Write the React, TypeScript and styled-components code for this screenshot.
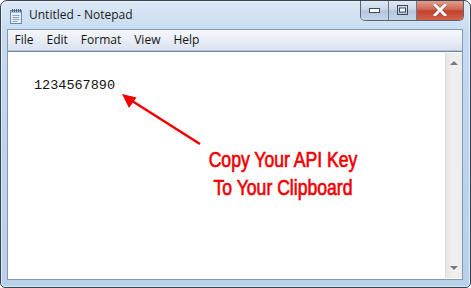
import React from 'react'
import styled, { createGlobalStyle } from 'styled-components'

const GlobalStyle = createGlobalStyle`
  html, body {
    margin: 0;
    padding: 0;
    background: #ffffff;
  }
`

const Window = styled.div`
  position: relative;
  box-sizing: border-box;
  width: 471px;
  height: 288px;
  display: flex;
  flex-direction: column;
  border: 1px solid #3a4250;
  border-radius: 7px 7px 5px 5px;
  background: linear-gradient(180deg, #dbe8f6 0%, #c6daf0 12%, #bcd3ec 60%, #b8d0ea 100%);
  box-shadow: inset 0 0 0 1px rgba(255, 255, 255, 0.55);
  font-family: 'Open Sans', 'Liberation Sans', sans-serif;
  overflow: hidden;
`

const TitleBar = styled.div`
  height: 28px;
  display: flex;
  align-items: flex-start;
  padding-left: 7px;
`

const AppIcon = styled.svg`
  width: 16px;
  height: 16px;
  margin-top: 7px;
  flex: none;
`

const Title = styled.div`
  margin-left: 5px;
  margin-top: 6px;
  font-size: 12px;
  line-height: 16px;
  color: #1b1b1b;
`

const Caption = styled.div`
  margin-left: auto;
  margin-right: 6px;
  margin-top: -1px;
  display: flex;
  height: 20px;
  border: 1px solid #5b6373;
  border-top: none;
  border-radius: 0 0 5px 5px;
  overflow: hidden;
`

const CaptionButton = styled.div<{ $w: number; $close?: boolean }>`
  width: ${(p) => p.$w}px;
  display: flex;
  align-items: center;
  justify-content: center;
  background: ${(p) =>
    p.$close
      ? 'linear-gradient(180deg, #e6a394 0%, #d06a58 45%, #c2412e 55%, #d3624a 100%)'
      : 'linear-gradient(180deg, #e2ebf5 0%, #cbd8e8 45%, #b5c6dc 55%, #c5d5e8 100%)'};
  & + & {
    border-left: 1px solid #6d7788;
  }
`

const Client = styled.div`
  flex: 1;
  margin: 0 7px 7px 6px;
  display: flex;
  flex-direction: column;
  border: 1px solid #8399b4;
  background: #ffffff;
`

const MenuBar = styled.div`
  height: 20px;
  display: flex;
  align-items: center;
  padding-left: 0;
  background: linear-gradient(180deg, #f6f8fc 0%, #e8edf6 50%, #dbe2ef 100%);
  border-bottom: 1px solid #b6c4d8;
`

const MenuItem = styled.div`
  padding: 0 6.5px;
  font-size: 12px;
  line-height: 18px;
  color: #141414;
`

const Editor = styled.div`
  position: relative;
  flex: 1;
  display: flex;
  border-top: 1px solid #6c86a8;
`

const TextArea = styled.div`
  flex: 1;
  padding: 26px 0 0 26px;
  font-family: 'Liberation Mono', 'DejaVu Sans Mono', monospace;
  font-size: 13.5px;
  line-height: 16px;
  color: #111111;
`

const Scrollbar = styled.div`
  width: 16px;
  margin: 1px 0 1px 0;
  display: flex;
  flex-direction: column;
  justify-content: space-between;
  align-items: center;
  background: linear-gradient(90deg, #e6e6e6 0%, #f0f0f0 40%, #ececec 100%);
  border-left: 1px solid #dedede;
`

const ScrollArrow = styled.div<{ $down?: boolean }>`
  width: 0;
  height: 0;
  margin: 8px 0;
  border-left: 4px solid transparent;
  border-right: 4px solid transparent;
  ${(p) =>
    p.$down ? 'border-top: 4px solid #7a7a7a;' : 'border-bottom: 4px solid #7a7a7a;'}
`

const Callout = styled.div`
  position: absolute;
  left: 125px;
  top: 94px;
  width: 300px;
  text-align: center;
  font-family: 'Liberation Sans', 'DejaVu Sans', sans-serif;
  font-weight: 400;
  font-size: 22px;
  line-height: 28px;
  color: #f20000;
  -webkit-text-stroke: 0.7px #f20000;
  transform: scaleX(0.8);
  transform-origin: 150px 0;
`

const ArrowLayer = styled.svg`
  position: absolute;
  left: 0;
  top: 0;
  width: 471px;
  height: 288px;
  pointer-events: none;
`

const NotepadIcon = () => (
  <AppIcon viewBox="0 0 16 16">
    <rect x="2.5" y="2.5" width="11" height="13" fill="#e9f1f8" stroke="#6f8aa8" />
    <rect x="3" y="3" width="10" height="2" fill="#9fc3e6" />
    <line x1="4.5" y1="7.5" x2="11.5" y2="7.5" stroke="#8aa2bd" />
    <line x1="4.5" y1="9.5" x2="11.5" y2="9.5" stroke="#8aa2bd" />
    <line x1="4.5" y1="11.5" x2="11.5" y2="11.5" stroke="#8aa2bd" />
    <line x1="4.5" y1="13.5" x2="9.5" y2="13.5" stroke="#8aa2bd" />
    {[4, 6, 8, 10, 12].map((x) => (
      <rect key={x} x={x} y="1" width="1" height="3" fill="#4d6378" />
    ))}
  </AppIcon>
)

const menus = ['File', 'Edit', 'Format', 'View', 'Help']

export default function App() {
  return (
    <>
      <GlobalStyle />
      <Window>
        <TitleBar>
          <NotepadIcon />
          <Title>Untitled - Notepad</Title>
          <Caption>
            <CaptionButton $w={27}>
              <svg width="11" height="5" viewBox="0 0 11 5">
                <rect x="0.5" y="0.5" width="10" height="4" fill="#ffffff" stroke="#3d4a5c" />
              </svg>
            </CaptionButton>
            <CaptionButton $w={27}>
              <svg width="11" height="10" viewBox="0 0 11 10">
                <rect x="0.5" y="0.5" width="10" height="9" fill="none" stroke="#3d4a5c" />
                <rect x="2.5" y="3" width="6" height="4" fill="#ffffff" stroke="#3d4a5c" />
              </svg>
            </CaptionButton>
            <CaptionButton $w={46} $close>
              <svg width="14" height="12" viewBox="0 0 14 12">
                <path
                  d="M2 1 L12 11 M12 1 L2 11"
                  stroke="#5e2a22"
                  strokeWidth="4.4"
                  strokeLinecap="square"
                  opacity="0.5"
                />
                <path
                  d="M2 1 L12 11 M12 1 L2 11"
                  stroke="#ffffff"
                  strokeWidth="3"
                  strokeLinecap="square"
                />
              </svg>
            </CaptionButton>
          </Caption>
        </TitleBar>
        <Client>
          <MenuBar>
            {menus.map((m) => (
              <MenuItem key={m}>{m}</MenuItem>
            ))}
          </MenuBar>
          <Editor>
            <TextArea>1234567890</TextArea>
            <Scrollbar>
              <ScrollArrow />
              <ScrollArrow $down />
            </Scrollbar>
            <Callout>
              Copy Your API Key
              <br />
              To Your Clipboard
            </Callout>
          </Editor>
        </Client>
        <ArrowLayer viewBox="0 0 471 288">
          <line x1="199" y1="143" x2="128" y2="98" stroke="#f20000" strokeWidth="2.6" />
          <polygon points="121,93 135.5,96.5 128,107" fill="#f20000" />
        </ArrowLayer>
      </Window>
    </>
  )
}
